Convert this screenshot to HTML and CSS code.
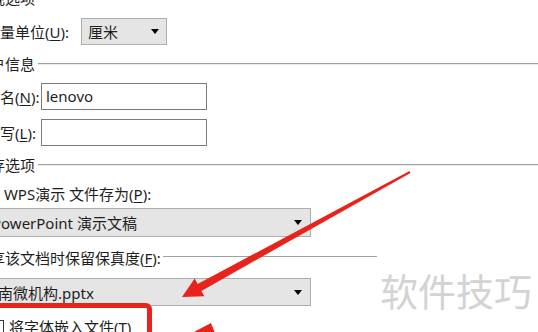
FILE: index.html
```html
<!DOCTYPE html>
<html lang="zh-CN">
<head>
    <meta charset="UTF-8">
    <meta name="viewport" content="width=device-width, initial-scale=1.0">
    <title>选项 - 常规与保存</title>
    <link rel="stylesheet" href="styles.css">
</head>
<body>
    <div class="dialog">
        <div class="group-title">常规选项</div>
        <div class="row unit-row">
            <span class="unit-label">度量单位(<u>U</u>):</span>
            <div class="dropdown unit-dropdown">
                <span>厘米</span>
                <span class="caret"></span>
            </div>
        </div>

        <div class="group-title">用户信息</div>
        <div class="row field-row">
            <span class="field-label">姓名(<u>N</u>):</span>
            <div class="text-input">lenovo</div>
        </div>
        <div class="row field-row">
            <span class="field-label">缩写(<u>L</u>):</span>
            <div class="text-input"></div>
        </div>

        <div class="group-title">保存选项</div>
        <div class="row label-row">将 WPS演示 文件存为(<u>P</u>):</div>
        <div class="dropdown select-wide select-format">
            <span>PowerPoint 演示文稿</span>
            <span class="caret"></span>
        </div>
        <div class="row share-row">
            <span class="share-label">共享该文档时保留保真度(<u>F</u>):</span>
            <span class="share-line"></span>
        </div>
        <div class="dropdown select-wide select-file">
            <span>南微机构.pptx</span>
            <span class="caret"></span>
        </div>
        <div class="row check-row">
            <span class="checkbox"></span>
            <span>将字体嵌入文件(<u>T</u>)</span>
        </div>
    </div>

    <div class="watermark">软件技巧</div>
    <div class="highlight-box"></div>
    <svg class="arrows" width="538" height="332" viewBox="0 0 538 332">
        <polygon fill="#e8231b" points="409.5,171.1 197.6,283.9 194.7,278.6 182,297 204.3,296.2 201.4,290.9 410.5,172.9"/>
        <polygon fill="#e8231b" points="192,333 211,323 215,333"/>
    </svg>
</body>
</html>
```

FILE: styles.css
```css
* {
    box-sizing: border-box;
}

body {
    margin: 0;
    width: 538px;
    height: 332px;
    overflow: hidden;
    position: relative;
    background: #fff;
    color: #1e1e1e;
    font-family: "Noto Sans", "Noto Sans CJK SC", sans-serif;
    font-size: 15px;
}

u {
    text-underline-offset: 2px;
}

.dialog {
    margin: -12px 0 0 -25px;
}

.group-title {
    display: flex;
    align-items: center;
    gap: 3px;
    height: 20px;
    line-height: 20px;
    margin-top: 9px;
    white-space: nowrap;
}

.group-title:first-child {
    margin-top: 0;
}

.group-title::after {
    content: "";
    flex: 1;
    border-top: 1px solid #a0a0a0;
    border-bottom: 1px solid #ececec;
}

.row {
    display: flex;
    align-items: center;
    padding-left: 10px;
    white-space: nowrap;
}

.unit-row {
    margin-top: 10px;
    height: 27px;
}

.unit-label {
    width: 96px;
}

.dropdown {
    display: flex;
    align-items: center;
    justify-content: space-between;
    background: #e5e5e5;
    border: 1px solid #adadad;
    white-space: nowrap;
}

.unit-dropdown {
    width: 86px;
    height: 27px;
    padding: 0 7px 0 6px;
}

.caret {
    width: 0;
    height: 0;
    border-left: 4px solid transparent;
    border-right: 4px solid transparent;
    border-top: 5px solid #000;
}

.field-row {
    margin-top: 9px;
    height: 27px;
}

.field-label {
    width: 56px;
}

.text-input {
    width: 166px;
    height: 27px;
    padding-left: 4px;
    line-height: 25px;
    border: 1px solid #7a7a7a;
    background: #fff;
}

.label-row {
    margin-top: 9px;
    height: 20px;
    line-height: 20px;
}

.select-wide {
    margin-left: 10px;
    width: 326px;
    padding-right: 8px;
}

.select-format {
    margin-top: 4px;
    height: 29px;
    padding-left: 6px;
}

.share-row {
    margin-top: 10px;
    height: 20px;
    padding-left: 0;
}

.share-line {
    width: 214px;
    margin-left: 2px;
    border-top: 1px solid #a0a0a0;
    margin-top: -1px;
}

.select-file {
    margin-top: 11px;
    height: 28px;
    padding-left: 12px;
}

.check-row {
    margin-top: 10px;
    height: 20px;
    gap: 5px;
    padding-left: 16px;
}

.checkbox {
    width: 13px;
    height: 13px;
    border: 1px solid #333;
    background: #fff;
}

.watermark {
    position: absolute;
    left: 380px;
    top: 271px;
    font-family: "Noto Sans CJK SC", sans-serif;
    font-size: 38px;
    line-height: 38px;
    color: #d3d3d3;
}

.highlight-box {
    position: absolute;
    left: -20px;
    top: 303px;
    width: 172px;
    height: 60px;
    border: 5px solid #e8231b;
    border-radius: 6px;
}

.arrows {
    position: absolute;
    top: 0;
    left: 0;
}
```
